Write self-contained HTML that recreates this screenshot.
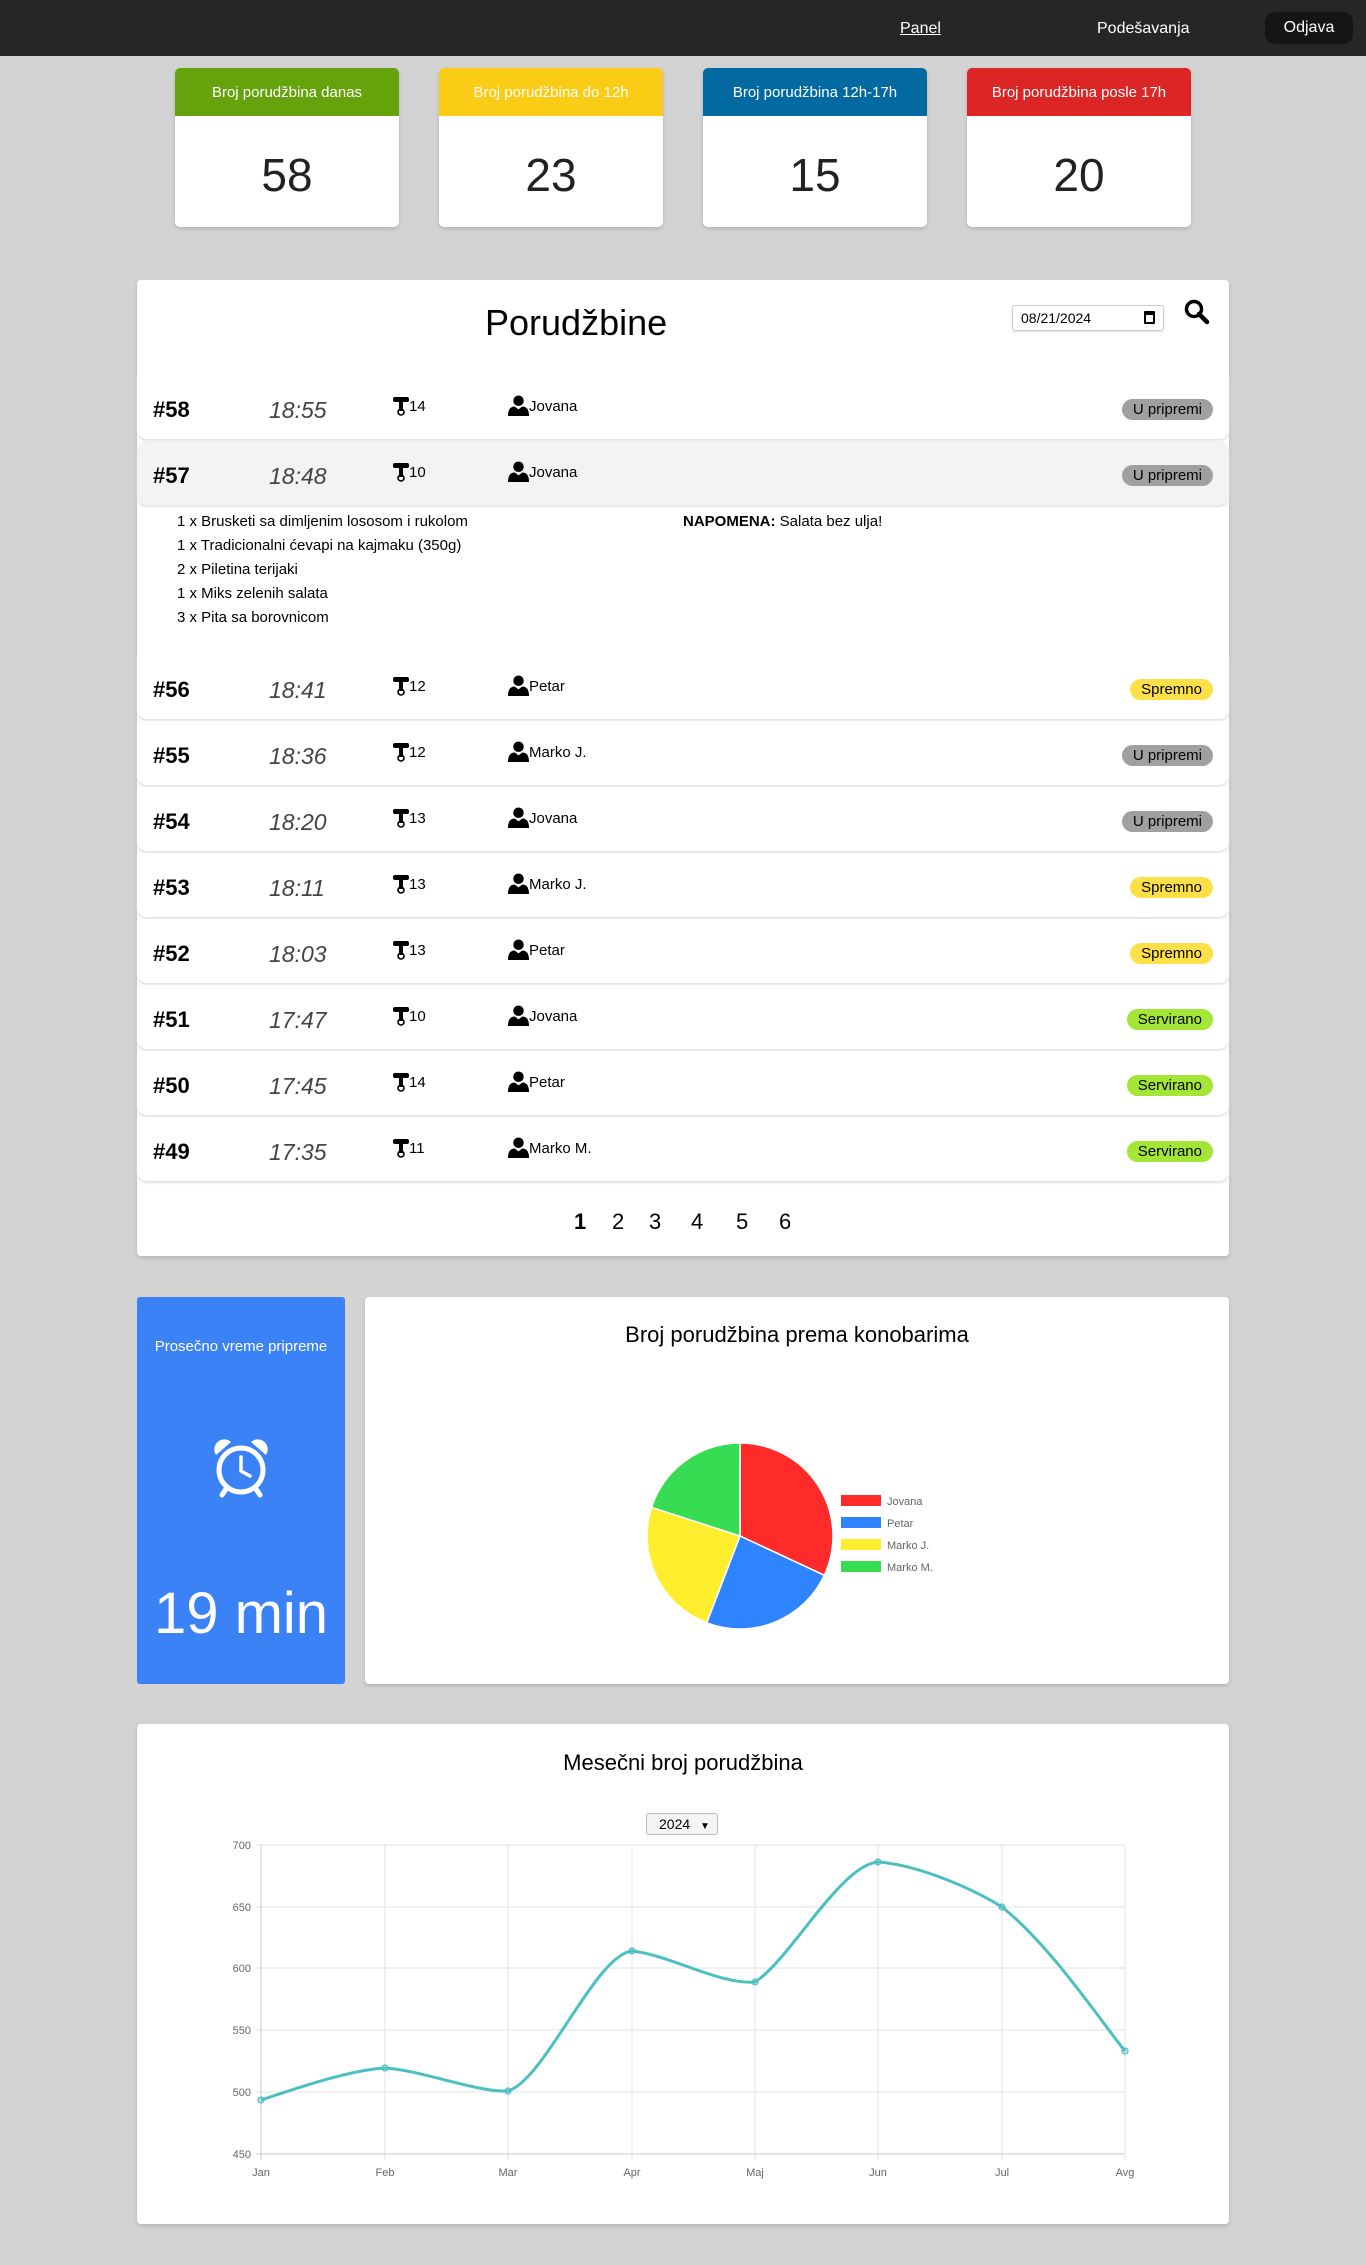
<!DOCTYPE html>
<html><head><meta charset="utf-8">
<style>
*{margin:0;padding:0;box-sizing:border-box}
body{width:1366px;height:2265px;background:#d3d3d3;font-family:"Liberation Sans",sans-serif;position:relative;overflow:hidden;color:#000}
.a{position:absolute}
.nav{left:0;top:0;width:1366px;height:56px;background:#262626}
.nav span{position:absolute;color:#fff;font-size:16px;top:20px}
.card{width:224px;height:159px;background:#fff;border-radius:5px;top:68px;box-shadow:0 2px 4px rgba(0,0,0,.15);overflow:hidden}
.card .h{height:48px;color:#fff;font-size:15px;text-align:center;line-height:50px}
.card .n{font-size:46px;text-align:center;line-height:118px;color:#222}
.panel{background:#fff;border-radius:4px;box-shadow:0 2px 4px rgba(0,0,0,.15)}
.row{left:137px;width:1092px;height:64px;background:#fff;border-radius:0 0 10px 10px;box-shadow:0 2px 2px #e2e2e6}
.row .id{position:absolute;left:16px;top:22px;font-size:22px;font-weight:bold}
.row .t{position:absolute;left:132px;top:22px;font-size:23px;font-style:italic;color:#444;font-weight:300}
.row .tb{position:absolute;left:256px;top:21px;font-size:15px}
.row .pr{position:absolute;left:371px;top:20px;font-size:15px}
.row .b{position:absolute;right:16px;top:24px;font-size:15px;padding:1px 11px;border-radius:11px;line-height:19px}
.g{background:#a0a0a0}.y{background:#fde047}.s{background:#a3e635}
.det{font-size:15px;line-height:24px}
</style></head><body>
<div class="a nav">
<span style="left:900px;text-decoration:underline">Panel</span>
<span style="left:1097px">Podešavanja</span>
<div class="a" style="left:1265px;top:12px;width:88px;height:32px;background:#151515;border-radius:10px;color:#fff;font-size:16px;text-align:center;line-height:32px">Odjava</div>
</div>
<div class="a card" style="left:175px"><div class="h" style="background:#65a30d">Broj porudžbina danas</div><div class="n">58</div></div>
<div class="a card" style="left:439px"><div class="h" style="background:#facc15">Broj porudžbina do 12h</div><div class="n">23</div></div>
<div class="a card" style="left:703px"><div class="h" style="background:#0369a1">Broj porudžbina 12h-17h</div><div class="n">15</div></div>
<div class="a card" style="left:967px"><div class="h" style="background:#dc2626">Broj porudžbina posle 17h</div><div class="n">20</div></div>

<div class="a panel" style="left:137px;top:280px;width:1092px;height:976px"></div>
<div class="a" style="left:485px;top:302px;font-size:36px">Porudžbine</div>
<div class="a" style="left:1012px;top:305px;width:152px;height:26px;border:1px solid #ccc;border-radius:3px;font-size:14px;padding:4px 8px;box-shadow:0 1px 2px #ddd">08/21/2024<span style="position:absolute;right:8px;top:5px;width:11px;height:13px;border:2px solid #000;border-top-width:4px;border-radius:1px"></span></div>
<svg class="a" style="left:1184px;top:299px" width="26" height="26" viewBox="0 0 26 26"><circle cx="10" cy="10" r="7.5" fill="none" stroke="#000" stroke-width="3.5"/><path d="M15 15 L23 23" stroke="#000" stroke-width="4.5" stroke-linecap="round"/></svg>

<svg width="0" height="0" style="position:absolute"><defs>
<symbol id="tbl" viewBox="0 0 16 20"><rect x="0" y="1" width="16" height="5" rx="2" fill="#000"/><rect x="6" y="5" width="4" height="10" fill="#000"/><circle cx="8" cy="16" r="3" fill="none" stroke="#000" stroke-width="1.6"/></symbol>
<symbol id="usr" viewBox="0 0 22 22"><circle cx="11" cy="6" r="5.5" fill="#000"/><path d="M0 22 Q0 12 7 12 L11 15 L15 12 Q22 12 22 22Z" fill="#000"/></symbol>
</defs></svg>

<div id="rows"></div>

<div class="a det" style="left:177px;top:510px">1 x Brusketi sa dimljenim lososom i rukolom<br>1 x Tradicionalni ćevapi na kajmaku (350g)<br>2 x Piletina terijaki<br>1 x Miks zelenih salata<br>3 x Pita sa borovnicom</div>
<div class="a det" style="left:683px;top:510px"><b>NAPOMENA:</b> Salata bez ulja!</div>

<div class="a" style="left:574px;top:1209px;font-size:22px"><b>1</b></div>
<div class="a" style="left:612px;top:1209px;font-size:22px">2</div>
<div class="a" style="left:649px;top:1209px;font-size:22px">3</div>
<div class="a" style="left:691px;top:1209px;font-size:22px">4</div>
<div class="a" style="left:736px;top:1209px;font-size:22px">5</div>
<div class="a" style="left:779px;top:1209px;font-size:22px">6</div>

<div class="a" style="left:137px;top:1297px;width:208px;height:387px;background:#3b82f6;border-radius:3px;color:#fff;text-align:center">
<div style="margin-top:41px;font-size:15px">Prosečno vreme pripreme</div>
<svg style="margin-top:82px" width="58" height="62" viewBox="0 0 58 62"><path d="M4 18 A10 10 0 0 1 19 5 Z" fill="#fff"/><path d="M54 18 A10 10 0 0 0 39 5 Z" fill="#fff"/><circle cx="29" cy="33" r="22" fill="none" stroke="#fff" stroke-width="5"/><path d="M29 20 V34 L38 39" fill="none" stroke="#fff" stroke-width="3.5" stroke-linecap="round"/><path d="M14 52 L10 58 M44 52 L48 58" stroke="#fff" stroke-width="5" stroke-linecap="round"/></svg>
<div style="margin-top:76px;font-size:58px;font-weight:300">19 min</div>
</div>

<div class="a panel" style="left:365px;top:1297px;width:864px;height:387px"></div>
<div class="a" style="left:365px;top:1322px;width:864px;text-align:center;font-size:22px">Broj porudžbina prema konobarima</div>
<svg class="a" style="left:0;top:0" width="1366" height="2265">
<g stroke="#fff" stroke-width="1.5">
<path d="M740 1536 L740 1443 A93 93 0 0 1 824.3 1575.3Z" fill="#ff2b2b"/>
<path d="M740 1536 L824.3 1575.3 A93 93 0 0 1 706.7 1622.8Z" fill="#2e83ff"/>
<path d="M740 1536 L706.7 1622.8 A93 93 0 0 1 651.6 1507.3Z" fill="#ffee2e"/>
<path d="M740 1536 L651.6 1507.3 A93 93 0 0 1 740 1443Z" fill="#36dd52"/>
</g>
<g font-family="Liberation Sans" font-size="11" fill="#666">
<rect x="841" y="1495" width="40" height="11" fill="#ff2b2b"/><text x="887" y="1505">Jovana</text>
<rect x="841" y="1517" width="40" height="11" fill="#2e83ff"/><text x="887" y="1527">Petar</text>
<rect x="841" y="1539" width="40" height="11" fill="#ffee2e"/><text x="887" y="1549">Marko J.</text>
<rect x="841" y="1561" width="40" height="11" fill="#36dd52"/><text x="887" y="1571">Marko M.</text>
</g>
</svg>

<div class="a panel" style="left:137px;top:1724px;width:1092px;height:500px"></div>
<div class="a" style="left:137px;top:1750px;width:1092px;text-align:center;font-size:22px">Mesečni broj porudžbina</div>
<div class="a" style="left:646px;top:1813px;width:72px;height:22px;border:1px solid #bbb;border-radius:3px;background:#f4f4f4;font-size:14px;padding:2px 0 0 12px">2024 <span style="font-size:10px;margin-left:6px">&#9660;</span></div>
<svg class="a" style="left:0;top:0" width="1366" height="2265">
<g stroke="#e3e3e3" stroke-width="1">
<line x1="256" y1="1845" x2="1125" y2="1845"/><line x1="256" y1="1907" x2="1125" y2="1907"/><line x1="256" y1="1968" x2="1125" y2="1968"/><line x1="256" y1="2030" x2="1125" y2="2030"/><line x1="256" y1="2092" x2="1125" y2="2092"/>
<line x1="385" y1="1845" x2="385" y2="2160"/><line x1="508" y1="1845" x2="508" y2="2160"/><line x1="632" y1="1845" x2="632" y2="2160"/><line x1="755" y1="1845" x2="755" y2="2160"/><line x1="878" y1="1845" x2="878" y2="2160"/><line x1="1002" y1="1845" x2="1002" y2="2160"/><line x1="1125" y1="1845" x2="1125" y2="2160"/>
</g>
<g stroke="#c8c8c8"><line x1="261" y1="1845" x2="261" y2="2160"/><line x1="256" y1="2154" x2="1125" y2="2154"/></g>
<g font-family="Liberation Sans" font-size="11" fill="#666" text-anchor="end">
<text x="251" y="1849">700</text><text x="251" y="1911">650</text><text x="251" y="1972">600</text><text x="251" y="2034">550</text><text x="251" y="2096">500</text><text x="251" y="2158">450</text>
</g>
<g font-family="Liberation Sans" font-size="11" fill="#666" text-anchor="middle">
<text x="261" y="2176">Jan</text><text x="385" y="2176">Feb</text><text x="508" y="2176">Mar</text><text x="632" y="2176">Apr</text><text x="755" y="2176">Maj</text><text x="878" y="2176">Jun</text><text x="1002" y="2176">Jul</text><text x="1125" y="2176">Avg</text>
</g>
<path d="M261 2100 C300 2087 350 2070 385 2068 C420 2070 480 2093 508 2091 C545 2080 595 1955 632 1951 C670 1955 720 1985 755 1982 C790 1960 840 1865 878 1862 C920 1865 975 1890 1002 1907 C1050 1945 1100 2020 1125 2051" fill="none" stroke="#4bc0c0" stroke-width="3"/>
<g fill="rgba(75,192,192,.3)" stroke="#4bc0c0" stroke-width="1.2">
<circle cx="261" cy="2100" r="3"/><circle cx="385" cy="2068" r="3"/><circle cx="508" cy="2091" r="3"/><circle cx="632" cy="1951" r="3"/><circle cx="755" cy="1982" r="3"/><circle cx="878" cy="1862" r="3"/><circle cx="1002" cy="1907" r="3"/><circle cx="1125" cy="2051" r="3"/>
</g>
</svg>

<script>
var d=[["#58","18:55","14","Jovana","U pripremi","g",375],["#57","18:48","10","Jovana","U pripremi","g",441],
["#56","18:41","12","Petar","Spremno","y",655],["#55","18:36","12","Marko J.","U pripremi","g",721],
["#54","18:20","13","Jovana","U pripremi","g",787],["#53","18:11","13","Marko J.","Spremno","y",853],
["#52","18:03","13","Petar","Spremno","y",919],["#51","17:47","10","Jovana","Servirano","s",985],
["#50","17:45","14","Petar","Servirano","s",1051],["#49","17:35","11","Marko M.","Servirano","s",1117]];
var h="";d.forEach(function(r,i){h+='<div class="a row" style="top:'+r[6]+'px;'+(i==1?'background:#f3f3f3;border-radius:10px;':'')+'"><span class="id">'+r[0]+'</span><span class="t">'+r[1]+'</span><span class="tb"><svg width="16" height="20" style="vertical-align:-5px"><use href="#tbl"/></svg>'+r[2]+'</span><span class="pr"><svg width="21" height="21" style="vertical-align:-5px"><use href="#usr"/></svg>'+r[3]+'</span><span class="b '+r[5]+'">'+r[4]+'</span></div>';});
document.getElementById("rows").innerHTML=h;
</script>
</body></html>
